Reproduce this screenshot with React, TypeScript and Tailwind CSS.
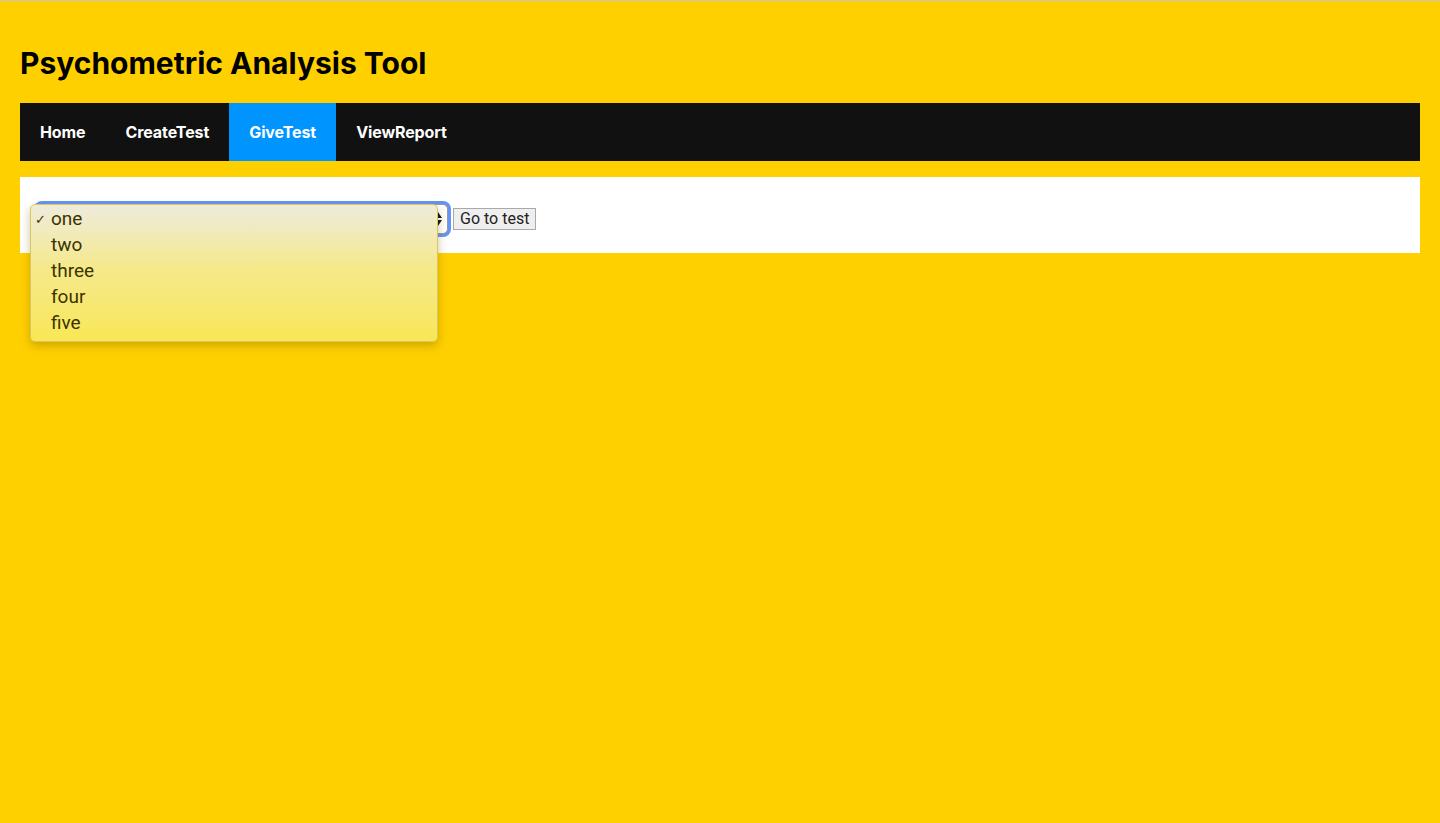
import { useState } from "react";

const navItems = ["Home", "CreateTest", "GiveTest", "ViewReport"];
const tests = ["one", "two", "three", "four", "five"];

/**
 * GIVE TEST PAGE
 * @description header, nav bar and the test picker with its open menu
 */
export default function App() {
  const [active] = useState("GiveTest");
  const [selected] = useState("one");

  return (
    <div className="min-h-[823px] bg-[#ffd000] border-t border-[#c4c4c4] font-['Inter',sans-serif]">
      {/* title */}
      <div className="px-5 pt-[42px] pb-[20px]">
        <h1 className="text-[30px] leading-[40px] font-bold text-black">
          Psychometric Analysis Tool
        </h1>
      </div>

      {/* nav */}
      <div className="mx-5 flex bg-[#111111]">
        {navItems.map((item) => (
          <a
            key={item}
            className={
              item === active
                ? "h-[58px] px-5 flex items-center text-white text-base font-bold tracking-[-0.1px] bg-[#0094ff]"
                : "h-[58px] px-5 flex items-center text-white text-base font-bold tracking-[-0.1px]"
            }
          >
            {item}
          </a>
        ))}
      </div>

      {/* picker */}
      <div className="mx-5 mt-4 h-[76px] bg-white flex items-center pl-[17px] pt-[7px]">
        <div className="relative">
          <div className="w-[411px] h-[30px] rounded-[5px] bg-white border border-[#9a9a9a] ring-[3px] ring-[#6494f4] flex items-center justify-end pr-1">
            <svg width="10" height="16" viewBox="0 0 10 16">
              <path d="M5 1 L9 7 L1 7 Z" fill="#111" />
              <path d="M5 15 L9 9 L1 9 Z" fill="#111" />
            </svg>
          </div>

          {/* open menu */}
          <div className="absolute left-[-7px] top-0 w-[408px] h-[138px] rounded-[5px] bg-gradient-to-b from-[#eeebdc] via-[#f5e98c] via-45% to-[#f9e754] border border-[#d8c860] shadow-[0_4px_10px_rgba(120,90,0,0.35)] pt-[2px] font-['Roboto',sans-serif]">
            {tests.map((t) => (
              <div key={t} className="h-[26px] flex items-center text-[19px] text-[#3b3400]">
                <span className="w-[20px] pl-[4px] text-[13px]">
                  {t === selected ? "✓" : ""}
                </span>
                {t}
              </div>
            ))}
          </div>
        </div>
        <button className="ml-[5px] h-[22px] px-[6px] border border-[#a9a9a9] bg-[#efefef] text-[16px] leading-[20px] text-[#222] font-['Roboto',sans-serif]">
          Go to test
        </button>
      </div>
    </div>
  );
}
